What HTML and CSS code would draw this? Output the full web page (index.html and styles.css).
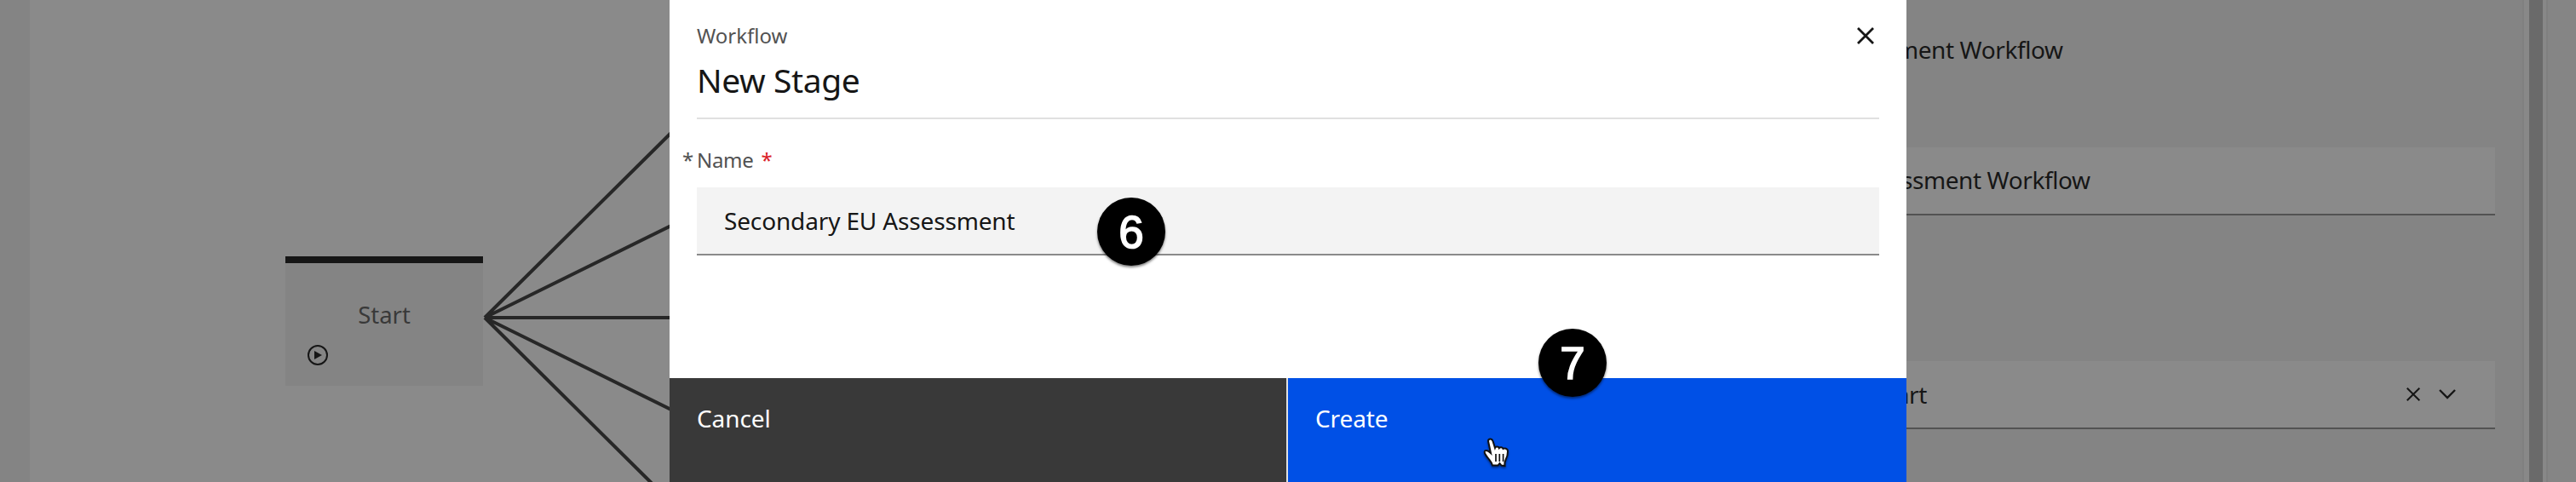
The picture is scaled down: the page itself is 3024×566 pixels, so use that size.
FILE: index.html
```html
<!DOCTYPE html>
<html lang="en">
<head>
<meta charset="utf-8">
<title>Workflow - New Stage</title>
<link rel="stylesheet" href="styles.css">
</head>
<body>
<main class="app">
  <div class="gutter"></div>
  <section class="canvas">
    <svg class="edges" width="240" height="566" viewBox="0 0 240 566">
      <path d="M8 373L251 132M8 373L249 254M8 373H249M8 373L249 492M8 373L251 614"/>
    </svg>
    <article class="node">
      <span class="node-title">Start</span>
      <svg class="play" width="24" height="24" viewBox="0 0 24 24"><circle cx="12" cy="12" r="11"/><path d="M8 7l9 5-9 5z"/></svg>
    </article>
  </section>
  <aside class="panel">
    <div class="panel-value"><span class="t t-flow">Assessment Workflow</span></div>
    <div class="field field-name"><span class="t t-flow">Assessment Workflow</span></div>
    <div class="field field-start">
      <span class="t t-start">Start</span>
      <svg class="clear" width="16" height="16" viewBox="0 0 16 16"><path d="M.7.7l14.6 14.6M15.3.7L.7 15.3"/></svg>
      <svg class="chevron" width="20" height="12" viewBox="0 0 20 12"><path d="M1 1l9 9 9-9"/></svg>
    </div>
  </aside>
  <div class="scroll"><div class="thumb"></div></div>
  <div class="edge"></div>
</main>
<div class="modal" role="dialog">
  <header class="modal-head">
    <div>
      <p class="eyebrow"><span class="t t-eyebrow">Workflow</span></p>
      <h1 class="title"><span class="t t-title">New Stage</span></h1>
    </div>
    <svg class="close" width="20" height="20" viewBox="0 0 20 20"><path d="M1 1l18 18M19 1L1 19"/></svg>
  </header>
  <div class="modal-body">
    <div class="label"><span class="star">*</span><span class="t t-name">Name</span><span class="star required">*</span></div>
    <div class="input"><span class="t t-input">Secondary EU Assessment</span></div>
  </div>
  <footer class="actions">
    <div class="btn cancel"><span class="t t-cancel">Cancel</span></div>
    <div class="btn create"><span class="t t-create">Create</span></div>
  </footer>
</div>
<div class="badge six">6</div>
<div class="badge seven">7</div>
<svg class="pointer" width="36" height="38" viewBox="0 0 36 38">
  <path class="hand" d="M7 5C7 1.500 11.500 1.500 12.500 5L15 13c.8-2 4-1.800 4.800.2 1.200-1.500 4-1.200 4.700.8 1.500-1 5.500-.5 5.500 3 0 4-.8 7-2.300 9.500-1.200 2-1.700 4-1.200 7.500l-4-.5-2-2.500-2 2.500H12c-1-4-3.500-6-5.500-9C4.500 22 1.500 18.500 3 16.500c2-1.500 4.500 0 7 2.500z"/>
  <path class="fingers" d="M16 20v9M20.300 20v9M24.600 20v9"/>
</svg>
</body>
</html>
```
FILE: styles.css
```css
* { box-sizing: border-box; }
body { margin: 0; width: 3024px; height: 566px; overflow: hidden; position: relative; font-family: "Noto Sans", sans-serif; font-size: 28px; color: #161616; }
p, h1 { margin: 0; font-weight: 400; }
svg { display: block; fill: none; flex: none; }
.t { display: inline-block; white-space: nowrap; }

.app { display: flex; height: 566px; background: #858585; }
.gutter { width: 35px; background: #848484; }
.canvas { width: 1400px; background: #8a8a8a; position: relative; }
.edges { position: absolute; left: 526px; top: 0; stroke: #272727; stroke-width: 4; }
.node { position: absolute; left: 300px; top: 301px; width: 232px; height: 152px; padding: 36px 26px 0; border-top: 8px solid #161616; background: #848484; display: flex; flex-direction: column; }
.node-title { align-self: center; color: #393939; line-height: 50px; font-size: 27.500px; }
.play { margin-top: 10px; stroke: #161616; stroke-width: 2; }
.play path { fill: #161616; stroke: none; }
.panel { width: 1526px; padding-right: 32px; background: #848484; }
.t-flow, .t-start { letter-spacing: -.4px; }
.panel-value { height: 173px; padding: 33px 0 0 706px; line-height: 50px; }
.field { height: 80px; border-bottom: 2px solid #525252; background: #8a8a8a; margin-left: 600px; padding: 0 0 2px 138px; display: flex; align-items: center; line-height: 50px; }
.field-start { margin-top: 171px; padding: 0 46px 0 166px; }
.field-start .clear { margin-left: auto; margin-right: 22px; stroke: #161616; stroke-width: 2; }
.chevron { stroke: #161616; stroke-width: 2.400; }
.scroll { width: 28px; padding-left: 6px; border-left: 2px solid #808080; background: #888; }
.thumb { width: 16px; height: 566px; background: #6a6a6a; }
.edge { flex: 1; border-left: 2px solid #808080; background: #858585; }

.modal { position: absolute; left: 786px; top: 0; width: 1452px; height: 566px; background: #fff; display: flex; flex-direction: column; }
.modal-head { height: 140px; margin: 0 32px; padding-top: 24px; border-bottom: 2px solid #e0e0e0; display: flex; justify-content: space-between; }
.eyebrow { font-size: 24px; line-height: 36px; color: #525252; }
.title { font-size: 39px; line-height: 68px; letter-spacing: -.4px; }
.close { margin: 8px 6px 0 0; stroke: #161616; stroke-width: 2.800; }
.modal-body { flex: 1; padding: 30px 32px 0; }
.label { height: 50px; margin-left: -17px; display: flex; font-size: 24px; line-height: 36px; color: #525252; }
.star { width: 17px; }
.t-name { letter-spacing: -.3px; }
.required { color: #da1e28; margin-left: 9px; }
.input { height: 80px; padding: 0 32px; background: #f3f3f3; border-bottom: 2px solid #8a8a8a; line-height: 78px; letter-spacing: -.15px; }
.actions { height: 122px; display: flex; color: #fff; line-height: 50px; }
.btn { padding: 22px 32px; letter-spacing: -.1px; }
.cancel { width: 726px; background: #393939; border-right: 2px solid #e0e0e0; }
.create { flex: 1; background: #0050e6; }

.badge { position: absolute; width: 80px; height: 80px; border-radius: 50%; background: #000; color: #fff; font: 400 53px/82px "Liberation Sans", sans-serif; -webkit-text-stroke: 1.600px #fff; text-align: center; box-shadow: 0 2px 3px rgba(0,0,0,.5); }
.six { left: 1288px; top: 232px; }
.seven { left: 1806px; top: 386px; }
.pointer { position: absolute; left: 1740px; top: 513px; filter: drop-shadow(0 2px 1px rgba(0,0,0,.4)); }
.hand { fill: #fff; stroke: #111; stroke-width: 2; }
.fingers { stroke: #111; stroke-width: 1.700; }
```
